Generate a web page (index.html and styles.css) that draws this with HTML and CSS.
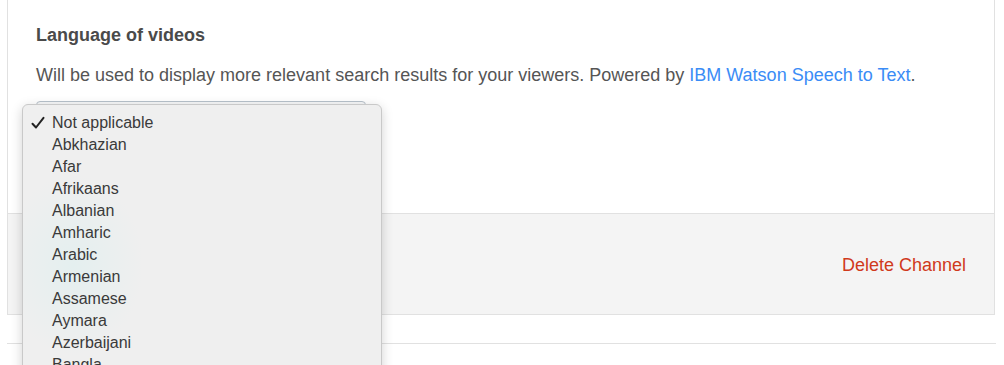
FILE: index.html
```html
<html>
<head>
  <link rel="stylesheet" href="styles.css">
</head>
<body>
<div class="page">
  <div class="card">
    <div class="section">
      <h2 class="label">Language of videos</h2>
      <p class="hint">Will be used to display more relevant search results for your viewers. Powered by <a href="#">IBM Watson Speech to Text</a>.</p>
      <div class="select"></div>
    </div>
    <div class="footer">
      <a class="danger" href="#">Delete Channel</a>
    </div>
  </div>
  <div class="rule"></div>
</div>

<ul class="menu">
  <li class="checked">
    <svg class="check" width="14" height="14" viewBox="0 0 14 14"><path d="M1.5 7.8 L5 11.5 L12.5 1.8" fill="none" stroke="#222" stroke-width="2" stroke-linecap="round" stroke-linejoin="round"/></svg>
    Not applicable
  </li>
  <li>Abkhazian</li>
  <li>Afar</li>
  <li>Afrikaans</li>
  <li>Albanian</li>
  <li>Amharic</li>
  <li>Arabic</li>
  <li>Armenian</li>
  <li>Assamese</li>
  <li>Aymara</li>
  <li>Azerbaijani</li>
  <li>Bangla</li>
</ul>
</body>
</html>
```

FILE: styles.css
```css
html, body {
  margin: 0;
  font: normal 18px "Liberation Sans", Arial, Helvetica, sans-serif;
  color: #555;
  background: #fff;
  overflow: hidden;
}
.page {
  padding: 0 9px 0 7px;
}
.card {
  border: 1px solid #e1e1e1;
  border-top: none;
}
.rule {
  margin: 28px -1px 0 0;
  border-top: 1px solid #e1e1e1;
  height: 40px;
}
.section {
  padding: 25px 28px 0 28px;
  height: 188px;
}
.label {
  margin: 0;
  font-size: 18px;
  line-height: 21px;
  font-weight: bold;
  color: #4a4a4a;
}
.hint {
  margin: 19px 0 0 0;
  line-height: 21px;
}
.hint a {
  color: #3a8cf6;
  text-decoration: none;
}
.select {
  margin-top: 15px;
  width: 328px;
  height: 30px;
  border: 1px solid #b8c2cb;
  border-radius: 4px;
  background: #f7f8f9;
}
.footer {
  height: 100px;
  border-top: 1px solid #e1e1e1;
  background: #f4f4f4;
  display: flex;
  align-items: center;
  justify-content: flex-end;
  padding-right: 28px;
}
.danger {
  color: #d0391b;
  text-decoration: none;
  font-size: 18px;
  margin-top: 2px;
}
.menu {
  position: absolute;
  left: 22px;
  top: 104px;
  width: 358px;
  height: 290px;
  margin: 0;
  padding: 7px 0 0 0;
  list-style: none;
  background: radial-gradient(ellipse 70px 90px at 50px 160px, #e4efef, rgba(239,239,239,0)) #efefef;
  border: 1px solid #c9c9c9;
  border-radius: 6px;
  box-shadow: 0 3px 12px rgba(0,0,0,0.18);
  font: normal 16px "Liberation Sans", Arial, sans-serif;
  color: #3a3a3a;
}
.menu li {
  position: relative;
  line-height: 22px;
  padding-left: 29px;
}
.menu .check {
  position: absolute;
  left: 8px;
  top: 4px;
}
```
